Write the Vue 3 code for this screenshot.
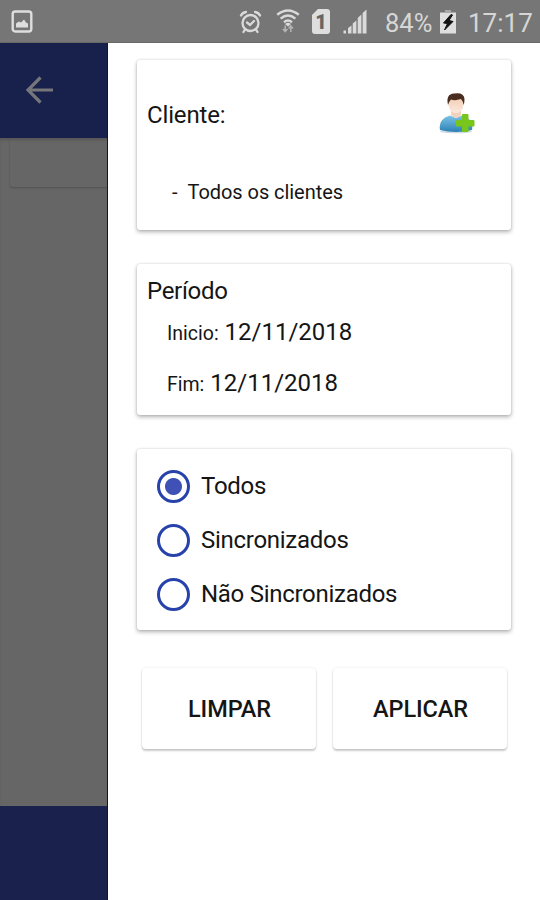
<template>
  <div class="screen">
    <header class="status-bar">
      <svg class="picture" viewBox="0 0 22 24" width="22" height="24">
        <rect x="1.7" y="2.500" width="18.600" height="20" rx="2.500" fill="none" stroke="#dedede" stroke-width="2.400" />
        <path d="M5 18.500v-4l3-2 2 1 3-3 2 3 2 1v4z" fill="#dedede" />
      </svg>
      <span class="spacer"></span>
      <svg class="alarm" viewBox="0 0 24 26" width="24" height="26">
        <g fill="none" stroke="#dadada" stroke-width="2.300" stroke-linecap="round">
          <circle cx="11.500" cy="14" r="8" />
          <path d="M2 6.500Q3.500 3.500 7 3M21 6.500Q19.500 3.500 16 3M6 20.500L4.500 23M17 20.500L18.500 23" />
          <path d="M8 13.500L11 16L15 12" />
        </g>
      </svg>
      <svg class="wifi" viewBox="0 0 24 28" width="24" height="28">
        <g fill="none" stroke="#dadada" stroke-width="2.4">
          <path d="M1.2 6.8Q12-1.8 22.800 6.800" />
          <path d="M4.600 10.600Q12 4.400 19.400 10.600" />
          <path d="M8 14.200Q12 11 16 14.200" />
        </g>
        <path d="M9 16Q12 13.600 15 16L12 18.500z" fill="#dadada" />
        <path d="M9.200 17.500v6M7 21l2.200 2.500L11.400 21M14.800 24v-6M12.600 20.500l2.200-2.500L17 20.500" fill="none" stroke="#b4b4b4" stroke-width="1.500" />
      </svg>
      <span class="sim">1</span>
      <svg class="signal" viewBox="0 0 24 25" width="24" height="25">
        <path d="M.5 21.500h2.500v3H.5zM5 19l3.500-2.500v8H5zM9.700 14.500l3.700-3v13H9.700zM14.700 9l3.700-3.500v19h-3.700zM19.600 4l3.900-3.500v24h-3.900z" fill="#dadada" />
      </svg>
      <span class="percent">84%</span>
      <svg class="battery" viewBox="0 0 16 25" width="16" height="25">
        <path d="M5 1h6v2h5v21.500H0V3h5z" fill="#dedede" />
        <path d="M5 1h6v2h5v1H0V3h5z" fill="#a8a8a8" />
        <path d="M11 5.500L3.500 14l4 .5L4.500 21 13 12.500 9 11.500 12.500 6z" fill="#111" stroke="#111" />
      </svg>
      <span class="clock">17:17</span>
    </header>

    <div class="body">
      <aside class="behind">
        <div class="toolbar">
          <svg viewBox="0 0 28 28" width="28" height="28">
            <path d="M14.500 1.500L2 14l12.500 12.500M2 14h25" fill="none" stroke="#74767a" stroke-width="3.200" />
          </svg>
        </div>
        <div class="list">
          <div class="list-card"></div>
        </div>
        <div class="footer"></div>
      </aside>

      <main class="drawer">
        <section class="card client">
          <div class="client-head">
            <span>Cliente:</span>
            <svg viewBox="0 0 36 42" width="36" height="42">
              <defs>
                <linearGradient id="shirt" x1="0" y1="0" x2="0" y2="1">
                  <stop offset="0" stop-color="#7cc4e6" />
                  <stop offset="1" stop-color="#2d80b5" />
                </linearGradient>
                <linearGradient id="skin" x1="0" y1="0" x2="0" y2="1">
                  <stop offset="0" stop-color="#f2cbb0" />
                  <stop offset="1" stop-color="#fbe9dd" />
                </linearGradient>
              </defs>
              <ellipse cx="17" cy="39.500" rx="16" ry="1.800" fill="#cfdbe1" />
              <path d="M1 38Q-1 27 11 23.500L17 26l6-2.500Q35 27 33 38Q17 42 1 38z" fill="url(#shirt)" />
              <path d="M12 17h10v6q-5 6-10 0z" fill="#f3d2bd" />
              <path d="M9.500 7Q17 1 24.500 7V13Q23 21 17 21Q11 21 9.500 13z" fill="url(#skin)" />
              <path d="M9 13Q6.500 2 15 1.500Q25 0 25.500 7Q25.500 11 24.500 13Q24 9 22 7Q16 9 12 7.500Q10 9.500 9 13z" fill="#4a2c20" />
              <path d="M23.500 22.500h5.500v6h6v5.500h-6v5.500h-5.500V34h-6v-5.500h6z" fill="#78c51c" stroke="#78c51c" stroke-linejoin="round" />
            </svg>
          </div>
          <div class="client-item"><span class="dash">-</span>Todos os clientes</div>
        </section>

        <section class="card period">
          <div class="title">Período</div>
          <div v-for="d in dates" :key="d.label" class="date-row">
            <span class="label">{{ d.label }}</span>
            <span class="date">{{ d.value }}</span>
          </div>
        </section>

        <section class="card options">
          <div v-for="opt in options" :key="opt" class="option" @click="selected = opt">
            <span class="radio" :class="{ checked: selected === opt }"></span>
            <span>{{ opt }}</span>
          </div>
        </section>

        <div class="actions">
          <button class="limpar" @click="clear">LIMPAR</button>
          <button class="aplicar">APLICAR</button>
        </div>
      </main>
    </div>
  </div>
</template>

<script setup>
import { ref } from 'vue'

const dates = [
  { label: 'Inicio:', value: '12/11/2018' },
  { label: 'Fim:', value: '12/11/2018' }
]

const options = ['Todos', 'Sincronizados', 'Não Sincronizados']
const selected = ref('Todos')

function clear() {
  selected.value = 'Todos'
}
</script>

<style>
body {
  margin: 0;
}
</style>

<style scoped>
.screen {
  width: 540px;
  height: 900px;
  display: flex;
  flex-direction: column;
  overflow: hidden;
  background: #fff;
  color: #151515;
  font-family: Roboto, "Liberation Sans", sans-serif;
}
/* barra de status */
.status-bar {
  box-sizing: border-box;
  height: 43px;
  flex: none;
  display: flex;
  align-items: flex-start;
  padding: 9px 8px 0 11px;
  background: #767676;
  border-bottom: 1px solid #686868;
  color: #d6d6d6;
  font-size: 26px;
  line-height: 28px;
}
.spacer {
  flex: 1;
}
.alarm {
  margin-right: 13px;
}
.wifi {
  margin: -1px 12px 0 0;
}
.sim {
  width: 18px;
  height: 25px;
  margin: 0 13px 0 0;
  border-radius: 3px;
  background: #dedede;
  clip-path: polygon(6px 0, 100% 0, 100% 100%, 0 100%, 0 6px);
  color: #666;
  font-size: 20px;
  font-weight: 900;
  line-height: 26px;
  text-align: center;
}
.signal {
  margin-right: 18px;
}
.percent {
  width: 55px;
  font-size: 25.5px;
}
.clock {
  width: 64px;
  margin-left: 12px;
}
.body {
  flex: 1;
  display: flex;
}
/* tela escurecida atrás do menu */
.behind {
  width: 108px;
  box-sizing: border-box;
  border-right: 1px solid #16171c;
  display: flex;
  flex-direction: column;
  background: #666;
}
.toolbar {
  box-sizing: border-box;
  height: 95px;
  padding: 33px 0 0 26px;
  background: #18204c;
}
.list {
  flex: 1;
  overflow: hidden;
  box-shadow: inset 0 3px 3px -1px #555;
}
.list-card {
  height: 49px;
  margin-left: 10px;
  border-radius: 0 0 0 3px;
  box-shadow: 0 1px 2px #505050;
}
.footer {
  height: 94px;
  background: #1a214c;
}
.drawer {
  flex: 1;
  padding: 17px 29px 0;
}
.card {
  box-sizing: border-box;
  border-radius: 3px;
  background: #fff;
  box-shadow: 0 2px 4px rgba(0, 0, 0, 0.3), 0 0 2px rgba(0, 0, 0, 0.16);
  font-size: 24px;
  line-height: 30px;
}
.client {
  height: 170px;
  padding: 32px 36px 0 10px;
}
.client-head {
  display: flex;
  justify-content: space-between;
  height: 80px;
}
.client-head span {
  padding-top: 8px;
  letter-spacing: -0.15px;
}
.client-item {
  padding: 5px 0 0 25px;
  font-size: 20px;
  letter-spacing: -0.05px;
}
.dash {
  margin-right: 10px;
}
.period {
  height: 151px;
  margin-top: 34px;
  padding: 12px 10px;
}
.title {
  height: 31px;
  letter-spacing: -0.3px;
}
.date-row {
  display: flex;
  align-items: baseline;
  height: 51px;
  padding: 10px 0 0 20px;
  box-sizing: border-box;
}
.label {
  margin-right: 6px;
  font-size: 19.5px;
}
.options {
  height: 181px;
  margin-top: 34px;
  padding: 10px 20px;
  letter-spacing: -0.28px;
}
.option {
  display: flex;
  align-items: center;
  height: 54px;
  cursor: pointer;
}
.radio {
  box-sizing: border-box;
  width: 33px;
  height: 33px;
  margin-right: 11px;
  border: 3px solid #2743ab;
  border-radius: 50%;
}
.radio.checked {
  background: radial-gradient(circle, #3f51b5 8px, #fff 9px);
}
.actions {
  display: flex;
  justify-content: space-between;
  margin: 38px 4px 0 5px;
}
button {
  width: 174px;
  height: 81px;
  padding: 0 0 0 1px;
  border: 0;
  border-radius: 4px;
  background: #fff;
  box-shadow: 0 2px 2px rgba(0, 0, 0, 0.2), 0 0 2px rgba(0, 0, 0, 0.12);
  color: #151515;
  font-family: inherit;
  font-size: 23.5px;
  font-weight: 500;
  letter-spacing: -0.1px;
  cursor: pointer;
}
</style>
